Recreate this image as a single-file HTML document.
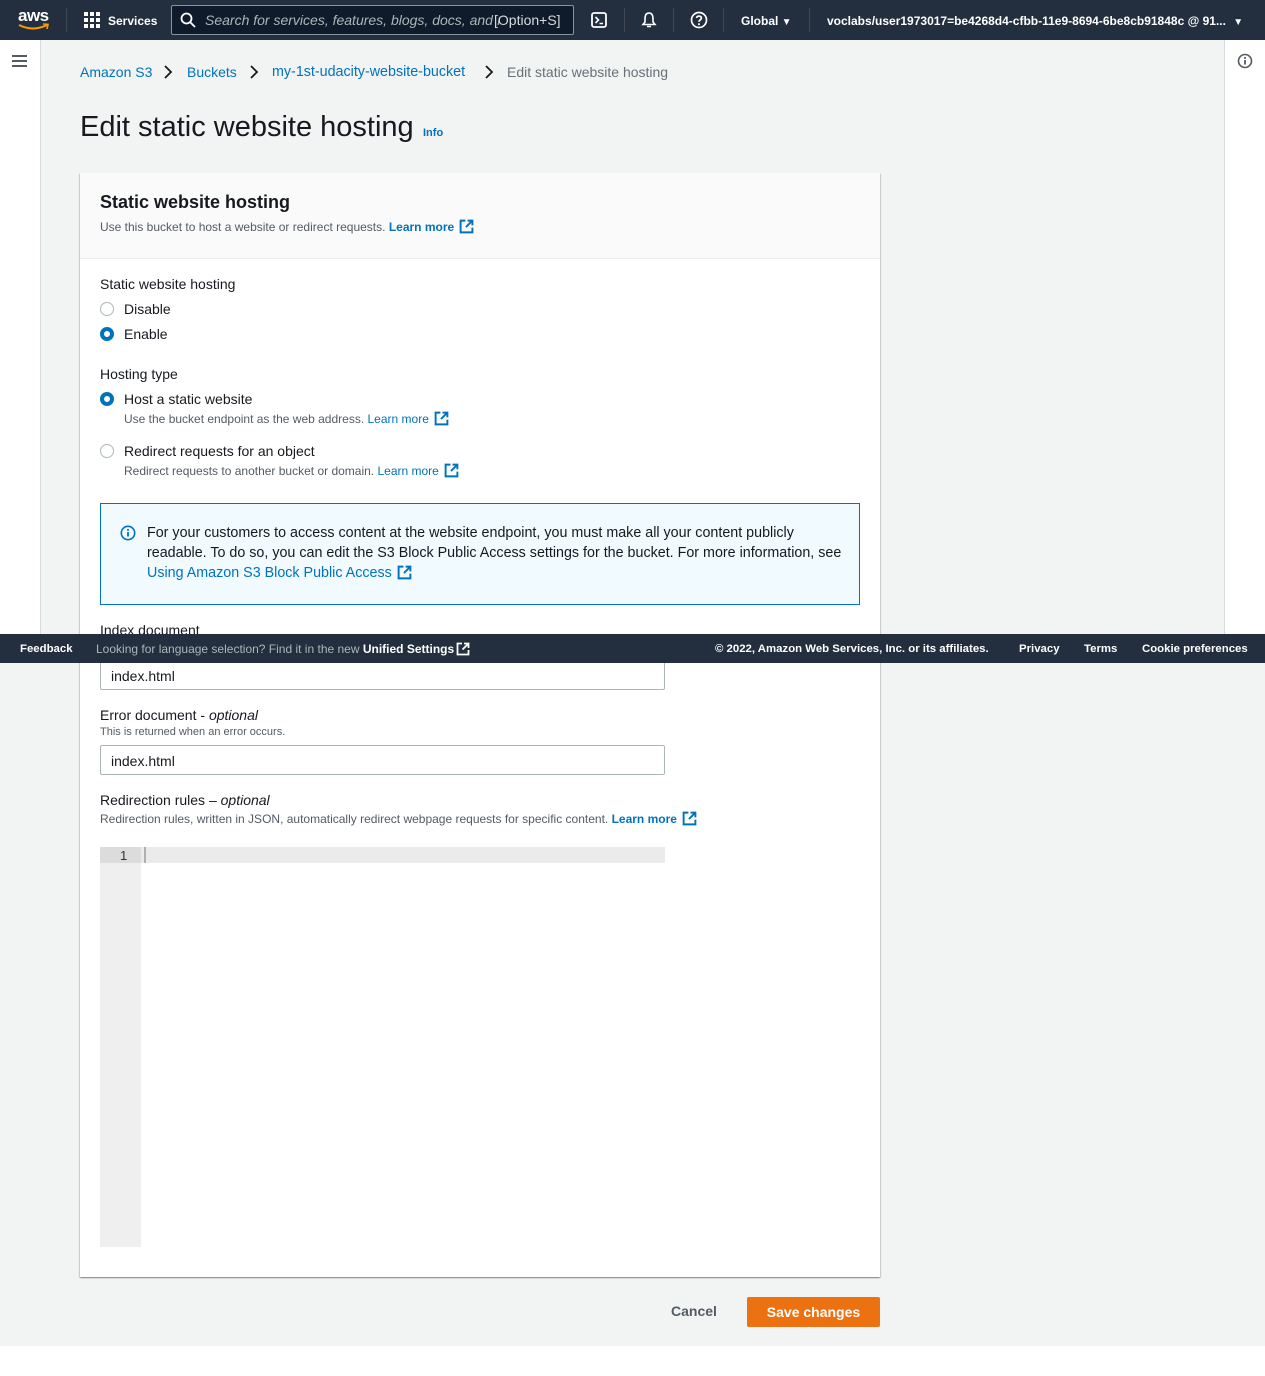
<!DOCTYPE html>
<html><head><meta charset="utf-8"><style>
*{box-sizing:border-box;margin:0;padding:0}
body{width:1265px;height:1376px;position:relative;background:#fff;font-family:"Liberation Sans",Arial,sans-serif;color:#16191f;overflow:hidden}
.a{position:absolute;white-space:nowrap}
.link{color:#0073bb}
.sub{color:#545b64;font-size:12px}
.ext{display:inline-block;vertical-align:-3px;margin-left:5px}
.radio{position:absolute;width:14px;height:14px;border-radius:50%;border:1.5px solid #aab7b8;background:#fff}
.radio.on{border:4px solid #0073bb}
.nav{color:#fff;font-size:12px;font-weight:bold}
.sep{position:absolute;top:8px;width:1px;height:24px;background:#414750}
</style></head><body>
<div class="a" style="left:0;top:40px;width:1265px;height:1306px;background:#f2f3f3"></div>
<div class="a" style="left:0;top:40px;width:41px;height:594px;background:#fff;border-right:1px solid #d5dbdb"></div>
<div class="a" style="left:12px;top:55px;width:15px;height:2px;background:#545b64;box-shadow:0 5px 0 #545b64,0 10px 0 #545b64"></div>
<div class="a" style="left:1224px;top:40px;width:41px;height:594px;background:#fff;border-left:1px solid #d5dbdb"></div>
<svg class="a" style="left:1237px;top:53px" width="16" height="16" viewBox="0 0 16 16"><circle cx="8" cy="8" r="6.5" fill="none" stroke="#545b64" stroke-width="1.6"/><rect x="7.1" y="7" width="1.8" height="4.5" fill="#545b64"/><rect x="7.1" y="4" width="1.8" height="1.8" fill="#545b64"/></svg>

<div class="a" style="left:0;top:0;width:1265px;height:40px;background:#232f3e"></div>
<div class="a" style="left:18px;top:6px;color:#fff;font-size:17px;font-weight:bold;letter-spacing:-0.5px">aws</div>
<svg class="a" style="left:17px;top:22px" width="34" height="10" viewBox="0 0 34 10"><path d="M2 3 Q16 10 30 3" stroke="#ff9900" stroke-width="2" fill="none"/><path d="M26 2 L31 2.5 L30 7" stroke="#ff9900" stroke-width="1.6" fill="none"/></svg>
<div class="sep" style="left:66px"></div>
<svg class="a" style="left:84px;top:12px" width="16" height="16" viewBox="0 0 16 16" fill="#fff"><rect x="0" y="0" width="4" height="4"/><rect x="6" y="0" width="4" height="4"/><rect x="12" y="0" width="4" height="4"/><rect x="0" y="6" width="4" height="4"/><rect x="6" y="6" width="4" height="4"/><rect x="12" y="6" width="4" height="4"/><rect x="0" y="12" width="4" height="4"/><rect x="6" y="12" width="4" height="4"/><rect x="12" y="12" width="4" height="4"/></svg>
<div class="a nav" style="left:108px;top:14px">Services</div>
<div class="a" style="left:171px;top:5px;width:403px;height:30px;border:1px solid #879596;border-radius:2px;background:#0f1b2a"></div>
<svg class="a" style="left:180px;top:12px" width="16" height="16" viewBox="0 0 16 16"><circle cx="6.5" cy="6.5" r="5" stroke="#fff" stroke-width="1.8" fill="none"/><path d="M10.5 10.5 L15 15" stroke="#fff" stroke-width="1.8"/></svg>
<div class="a" style="left:205px;top:12px;color:#aab7b8;font-size:14px;font-style:italic">Search for services, features, blogs, docs, and ı</div>
<div class="a" style="left:494px;top:12px;color:#d5dbdb;font-size:14px">[Option+S]</div>
<svg class="a" style="left:591px;top:12px" width="16" height="16" viewBox="0 0 16 16"><rect x="1" y="1" width="14" height="14" rx="2" stroke="#fff" stroke-width="1.8" fill="none"/><path d="M4.5 5 L7.5 8 L4.5 11 M8.5 11.5 H12" stroke="#fff" stroke-width="1.6" fill="none"/></svg>
<div class="sep" style="left:624px"></div>
<svg class="a" style="left:641px;top:11px" width="16" height="18" viewBox="0 0 16 18"><path d="M8 2 C4.5 2 4 5 4 8 L4 11 L2 13.5 H14 L12 11 L12 8 C12 5 11.5 2 8 2Z M6 15.5 H10" stroke="#fff" stroke-width="1.6" fill="none"/></svg>
<div class="sep" style="left:673px"></div>
<svg class="a" style="left:690px;top:11px" width="18" height="18" viewBox="0 0 18 18"><circle cx="9" cy="9" r="7.5" stroke="#fff" stroke-width="1.7" fill="none"/><path d="M6.6 7 C6.6 4.5 11.4 4.5 11.4 7 C11.4 8.8 9 8.8 9 10.8" stroke="#fff" stroke-width="1.7" fill="none"/><rect x="8.1" y="12.3" width="1.8" height="1.8" fill="#fff"/></svg>
<div class="sep" style="left:723px"></div>
<div class="a nav" style="left:741px;top:14px">Global <span style="font-size:10px">▼</span></div>
<div class="sep" style="left:809px"></div>
<div class="a nav" style="left:827px;top:14px">voclabs/user1973017=be4268d4-cfbb-11e9-8694-6be8cb91848c @ 91... <span style="font-size:10px;margin-left:4px">▼</span></div>

<div class="a" style="left:80px;top:64px;font-size:14px"><span class="link">Amazon S3</span></div>
<svg class="a" style="left:163px;top:64px" width="10" height="16" viewBox="0 0 10 16"><path d="M2 2 L8 8 L2 14" stroke="#16191f" stroke-width="1.8" fill="none"/></svg>
<div class="a" style="left:187px;top:64px;font-size:14px"><span class="link">Buckets</span></div>
<svg class="a" style="left:249px;top:64px" width="10" height="16" viewBox="0 0 10 16"><path d="M2 2 L8 8 L2 14" stroke="#16191f" stroke-width="1.8" fill="none"/></svg>
<div class="a" style="left:272px;top:64px;font-size:14.3px"><span class="link">my-1st-udacity-website-bucket</span></div>
<svg class="a" style="left:484px;top:64px" width="10" height="16" viewBox="0 0 10 16"><path d="M2 2 L8 8 L2 14" stroke="#16191f" stroke-width="1.8" fill="none"/></svg>
<div class="a" style="left:507px;top:64px;font-size:14px;color:#687078">Edit static website hosting</div>

<div class="a" style="left:80px;top:111px;font-size:29px;color:#16191f">Edit static website hosting</div>
<div class="a link" style="left:423px;top:127px;font-size:11px;font-weight:bold">Info</div>

<div class="a" style="left:80px;top:173px;width:800px;height:1104px;background:#fff;box-shadow:0 1px 1px rgba(0,28,36,.3),1px 1px 1px rgba(0,28,36,.15),-1px 1px 1px rgba(0,28,36,.15)"></div>
<div class="a" style="left:80px;top:173px;width:800px;height:86px;background:#fafafa;border-bottom:1px solid #eaeded"></div>
<div class="a" style="left:100px;top:192px;font-size:18px;font-weight:bold">Static website hosting</div>
<div class="a sub" style="left:100px;top:219px">Use this bucket to host a website or redirect requests. <b class="link">Learn more</b><svg class="ext" width="15" height="15" viewBox="0 0 14 14"><path d="M6 1.5 H1.5 V12.5 H12.5 V8 M8 1.5 H12.5 V6 M12.5 1.5 L6.5 7.5" stroke="#0073bb" stroke-width="1.8" fill="none"/></svg></div>

<div class="a" style="left:100px;top:276px;font-size:14px">Static website hosting</div>
<div class="radio" style="left:100px;top:302px"></div>
<div class="a" style="left:124px;top:301px;font-size:14px">Disable</div>
<div class="radio on" style="left:100px;top:327px"></div>
<div class="a" style="left:124px;top:326px;font-size:14px">Enable</div>

<div class="a" style="left:100px;top:366px;font-size:14px">Hosting type</div>
<div class="radio on" style="left:100px;top:392px"></div>
<div class="a" style="left:124px;top:391px;font-size:14px">Host a static website</div>
<div class="a sub" style="left:124px;top:411px">Use the bucket endpoint as the web address. <span class="link">Learn more</span><svg class="ext" width="15" height="15" viewBox="0 0 14 14"><path d="M6 1.5 H1.5 V12.5 H12.5 V8 M8 1.5 H12.5 V6 M12.5 1.5 L6.5 7.5" stroke="#0073bb" stroke-width="1.8" fill="none"/></svg></div>
<div class="radio" style="left:100px;top:444px"></div>
<div class="a" style="left:124px;top:443px;font-size:14px">Redirect requests for an object</div>
<div class="a sub" style="left:124px;top:463px">Redirect requests to another bucket or domain. <span class="link">Learn more</span><svg class="ext" width="15" height="15" viewBox="0 0 14 14"><path d="M6 1.5 H1.5 V12.5 H12.5 V8 M8 1.5 H12.5 V6 M12.5 1.5 L6.5 7.5" stroke="#0073bb" stroke-width="1.8" fill="none"/></svg></div>

<div class="a" style="left:100px;top:503px;width:760px;height:102px;background:#f1faff;border:1px solid #0073bb"></div>
<svg class="a" style="left:120px;top:525px" width="16" height="16" viewBox="0 0 16 16"><circle cx="8" cy="8" r="6.7" fill="none" stroke="#0073bb" stroke-width="1.6"/><rect x="7.1" y="7" width="1.8" height="4.5" fill="#0073bb"/><rect x="7.1" y="4" width="1.8" height="1.8" fill="#0073bb"/></svg>
<div class="a" style="left:147px;top:523px;font-size:14.3px;line-height:20px">For your customers to access content at the website endpoint, you must make all your content publicly<br>readable. To do so, you can edit the S3 Block Public Access settings for the bucket. For more information, see<br><span class="link">Using Amazon S3 Block Public Access</span><svg class="ext" width="15" height="15" viewBox="0 0 14 14"><path d="M6 1.5 H1.5 V12.5 H12.5 V8 M8 1.5 H12.5 V6 M12.5 1.5 L6.5 7.5" stroke="#0073bb" stroke-width="1.8" fill="none"/></svg></div>

<div class="a" style="left:100px;top:622px;font-size:14px">Index document</div>
<div class="a" style="left:100px;top:660px;width:565px;height:30px;border:1px solid #aab7b8;border-radius:2px;padding:7px 10px;font-size:14px">index.html</div>

<div class="a" style="left:100px;top:707px;font-size:14px">Error document - <i>optional</i></div>
<div class="a sub" style="left:100px;top:726px;font-size:11px">This is returned when an error occurs.</div>
<div class="a" style="left:100px;top:745px;width:565px;height:30px;border:1px solid #aab7b8;border-radius:2px;padding:7px 10px;font-size:14px">index.html</div>

<div class="a" style="left:100px;top:792px;font-size:14px">Redirection rules – <i>optional</i></div>
<div class="a sub" style="left:100px;top:811px">Redirection rules, written in JSON, automatically redirect webpage requests for specific content. <b class="link">Learn more</b><svg class="ext" width="15" height="15" viewBox="0 0 14 14"><path d="M6 1.5 H1.5 V12.5 H12.5 V8 M8 1.5 H12.5 V6 M12.5 1.5 L6.5 7.5" stroke="#0073bb" stroke-width="1.8" fill="none"/></svg></div>

<div class="a" style="left:100px;top:847px;width:41px;height:400px;background:#efefef"></div>
<div class="a" style="left:100px;top:847px;width:41px;height:16px;background:#dcdcdc"></div>
<div class="a" style="left:141px;top:847px;width:524px;height:16px;background:#ebebeb"></div>
<div class="a" style="left:144px;top:847px;width:2px;height:16px;background:#b0b0b0"></div>
<div class="a" style="left:120px;top:848px;font-size:13px;color:#333">1</div>

<div class="a" style="left:671px;top:1303px;font-size:14px;font-weight:bold;color:#545b64">Cancel</div>
<div class="a" style="left:747px;top:1297px;width:133px;height:30px;background:#ec7211;border-radius:2px;color:#fff;font-size:14px;font-weight:bold;text-align:center;line-height:30px">Save changes</div>

<div class="a" style="left:0;top:634px;width:1265px;height:29px;background:#232f3e"></div>
<div class="a" style="left:20px;top:643px;color:#fff;font-size:11.4px;font-weight:bold">Feedback</div>
<div class="a" style="left:96px;top:642px;color:#aab7b8;font-size:12px">Looking for language selection? Find it in the new <b style="color:#fff">Unified Settings</b><svg class="ext" style="margin-left:2px" width="14" height="14" viewBox="0 0 14 14"><path d="M6 1.5 H1.5 V12.5 H12.5 V8 M8 1.5 H12.5 V6 M12.5 1.5 L6.5 7.5" stroke="#fff" stroke-width="1.8" fill="none"/></svg></div>
<div class="a" style="left:715px;top:643px;color:#fff;font-size:11.4px;font-weight:bold">© 2022, Amazon Web Services, Inc. or its affiliates.</div>
<div class="a" style="left:1019px;top:643px;color:#fff;font-size:11.4px;font-weight:bold">Privacy</div>
<div class="a" style="left:1084px;top:643px;color:#fff;font-size:11.4px;font-weight:bold">Terms</div>
<div class="a" style="left:1142px;top:643px;color:#fff;font-size:11.4px;font-weight:bold">Cookie preferences</div>
</body></html>
